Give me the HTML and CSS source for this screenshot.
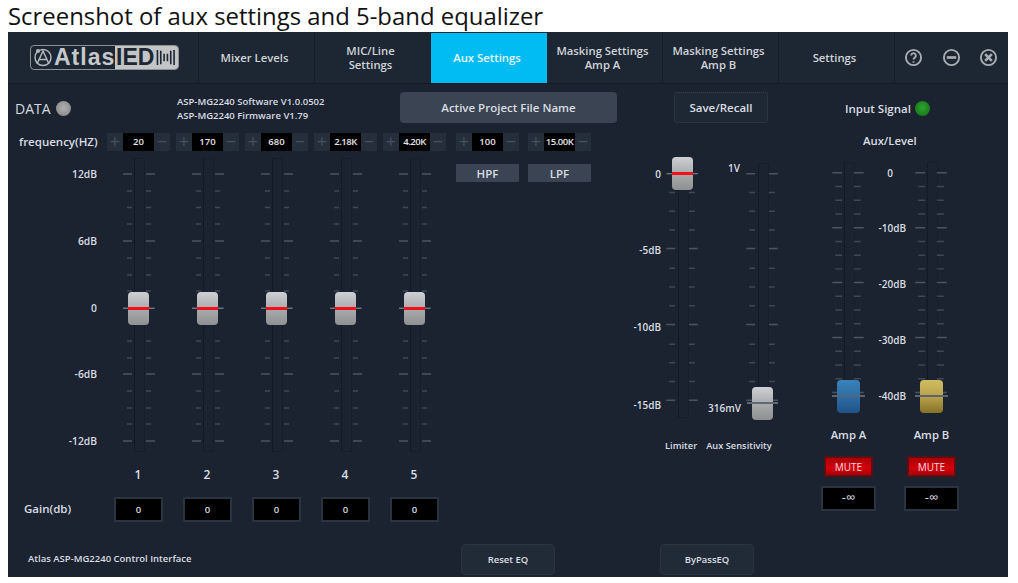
FILE: index.html
```html
<!DOCTYPE html>
<html lang="en">
<head>
<meta charset="utf-8">
<title>Aux settings</title>
<link rel="stylesheet" href="styles.css">
</head>
<body>
<svg class="defs" width="0" height="0" aria-hidden="true">
  <symbol id="eq-scale" viewBox="0 0 32 294">
    <path class="minor" d="M4 33h5M23 33h5M4 49.500h5M23 49.500h5M4 66h5M23 66h5M4 100h5M23 100h5M4 117h5M23 117h5M4 133h5M23 133h5M4 183h5M23 183h5M4 200h5M23 200h5M4 233h5M23 233h5M4 250h5M23 250h5M4 266h5M23 266h5"/>
    <path class="major" d="M0 16h9M23 16h9M0 83h9M23 83h9M0 150h9M23 150h9M0 216h9M23 216h9M0 283h9M23 283h9"/>
  </symbol>
  <symbol id="lim-scale" viewBox="0 0 32 264">
    <path class="minor" d="M3 35h6M23 35h6M3 54h6M23 54h6M3 73h6M23 73h6M3 112h6M23 112h6M3 131h6M23 131h6M3 150h6M23 150h6M3 189h6M23 189h6M3 208h6M23 208h6M3 227h6M23 227h6"/>
    <path class="major" d="M0 16h9M23 16h9M0 92h9M23 92h9M0 169h9M23 169h9M0 246h9M23 246h9"/>
  </symbol>
  <symbol id="aux-scale" viewBox="0 0 34 256">
    <path class="minor" d="M4 25h7M23 25h7M4 39h7M23 39h7M4 53h7M23 53h7M4 81h7M23 81h7M4 95h7M23 95h7M4 109h7M23 109h7M4 137h7M23 137h7M4 151h7M23 151h7M4 165h7M23 165h7M4 193h7M23 193h7M4 207h7M23 207h7M4 221h7M23 221h7"/>
    <path class="major" d="M1 11h10M23 11h10M1 67h10M23 67h10M1 123h10M23 123h10M1 179h10M23 179h10M1 235h10M23 235h10"/>
  </symbol>
</svg>

<h1 class="caption">Screenshot of aux settings and 5-band equalizer</h1>

<main class="panel">
  <header class="topbar">
    <div class="logo-cell">
      <div class="logo">
        <div class="logo-left">
          <svg class="logo-mark" viewBox="0 0 20 20"><circle cx="10" cy="10.500" r="8"/><path d="M4 17 10 4l6 13M6.500 12.500h7"/><circle class="ear" cx="5" cy="4" r="2"/></svg>
          <span class="logo-atlas">Atlas</span>
        </div>
        <div class="logo-right">
          <span class="logo-ied">IED</span>
          <svg class="logo-bars" viewBox="0 0 22 20"><path d="M2 2v16M5.500 3v14M9 6v8M12.500 6v8M16 3v14M19.500 2v16"/></svg>
        </div>
      </div>
    </div>
    <nav class="tabs">
      <a class="tab">Mixer Levels</a>
      <a class="tab">MIC/Line<br>Settings</a>
      <a class="tab tab-active">Aux Settings</a>
      <a class="tab">Masking Settings<br>Amp A</a>
      <a class="tab">Masking Settings<br>Amp B</a>
      <a class="tab">Settings</a>
    </nav>
    <div class="win-icons">
      <svg viewBox="0 0 20 20"><circle cx="10" cy="10" r="8"/><path d="M7.500 8a2.500 2.500 0 1 1 3.800 2.100c-.9.600-1.300 1-1.300 2"/><path d="M10 14v1.500"/></svg>
      <svg viewBox="0 0 20 20"><circle cx="10" cy="10" r="8"/><path class="thick" d="M5 10h10"/></svg>
      <svg viewBox="0 0 20 20"><circle cx="10" cy="10" r="8"/><path class="thick" d="m6.500 6.500 7 7M13.500 6.500l-7 7"/></svg>
    </div>
  </header>

  <section class="toolbar">
    <div class="data">DATA <span class="led led-grey"></span></div>
    <div class="version">ASP-MG2240 Software V1.0.0502<br>ASP-MG2240 Firmware V1.79</div>
    <button class="project">Active Project File Name</button>
    <button class="save">Save/Recall</button>
    <div class="signal">Input Signal <span class="led led-green"></span></div>
  </section>

  <section class="body">
    <div class="eq">
      <div class="freq-label">frequency(HZ)</div>
      <div class="step"><i>+</i><b>20</b><i>−</i></div>
      <div class="step"><i>+</i><b>170</b><i>−</i></div>
      <div class="step"><i>+</i><b>680</b><i>−</i></div>
      <div class="step"><i>+</i><b class="tight">2.18K</b><i>−</i></div>
      <div class="step"><i>+</i><b class="tight">4.20K</b><i>−</i></div>
      <div class="filters">
        <div class="step"><i>+</i><b>100</b><i>−</i></div>
        <div class="step"><i>+</i><b class="tight">15.00K</b><i>−</i></div>
        <button class="filter">HPF</button>
        <button class="filter">LPF</button>
      </div>

      <div class="eq-scale-labels">
        <span>12dB</span><span>6dB</span><span>0</span><span>-6dB</span><span>-12dB</span>
      </div>
      <div class="fader fader-eq"><svg class="scale"><use href="#eq-scale"/></svg><span class="thumb thumb-eq"></span></div>
      <div class="fader fader-eq"><svg class="scale"><use href="#eq-scale"/></svg><span class="thumb thumb-eq"></span></div>
      <div class="fader fader-eq"><svg class="scale"><use href="#eq-scale"/></svg><span class="thumb thumb-eq"></span></div>
      <div class="fader fader-eq"><svg class="scale"><use href="#eq-scale"/></svg><span class="thumb thumb-eq"></span></div>
      <div class="fader fader-eq"><svg class="scale"><use href="#eq-scale"/></svg><span class="thumb thumb-eq"></span></div>

      <div class="band band-first">1</div><div class="band">2</div><div class="band">3</div><div class="band">4</div><div class="band">5</div>

      <div class="gain-label">Gain(db)</div>
      <div class="gain">0</div><div class="gain">0</div><div class="gain">0</div><div class="gain">0</div><div class="gain">0</div>
    </div>

    <div class="mid">
      <div class="mid-faders">
        <div class="lim-labels"><span>0</span><span>-5dB</span><span>-10dB</span><span>-15dB</span></div>
        <div class="fader fader-lim"><svg class="scale"><use href="#lim-scale"/></svg><span class="thumb thumb-lim"></span></div>
        <div class="sens-labels"><span>1V</span><span>316mV</span></div>
        <div class="fader fader-sens"><svg class="scale"><use href="#lim-scale"/></svg><span class="thumb thumb-sens"></span></div>
      </div>
      <div class="mid-names"><span>Limiter</span><span>Aux Sensitivity</span></div>
    </div>

    <div class="aux">
      <div class="aux-title">Aux/Level</div>
      <div class="aux-faders">
        <div class="fader fader-aux"><svg class="scale"><use href="#aux-scale"/></svg><span class="thumb thumb-aux thumb-blue"></span></div>
        <div class="aux-labels"><span>0</span><span>-10dB</span><span>-20dB</span><span>-30dB</span><span>-40dB</span></div>
        <div class="fader fader-aux"><svg class="scale"><use href="#aux-scale"/></svg><span class="thumb thumb-aux thumb-gold"></span></div>
      </div>
      <div class="amps">
        <div class="amp"><div class="amp-name">Amp A</div><button class="mute">MUTE</button><div class="level">-∞</div></div>
        <div class="amp"><div class="amp-name">Amp B</div><button class="mute">MUTE</button><div class="level">-∞</div></div>
      </div>
    </div>
  </section>

  <footer class="foot">
    <div class="foot-text">Atlas ASP-MG2240 Control Interface</div>
    <button class="foot-btn reset">Reset EQ</button>
    <button class="foot-btn bypass">ByPassEQ</button>
  </footer>
</main>
</body>
</html>
```

FILE: styles.css
```css
* { box-sizing: border-box; }
html, body { margin: 0; background: #fff; }
body { font-family: "Open Sans", "Liberation Sans", sans-serif; color: #d9dde2; overflow: hidden; }
.defs { position: absolute; }
button { font: inherit; color: inherit; padding: 0; margin: 0; }

.caption { margin: 0; height: 32px; padding-left: 8px; font-family: "Open Sans", sans-serif; font-size: 23.900px; line-height: 31px; font-weight: 400; color: #111; white-space: nowrap; }

.panel { width: 1000px; height: 545px; margin-left: 8px; background: #1b2330; display: flex; flex-direction: column; font-size: 11px; font-weight: 600; }

/* header */
.topbar { height: 52px; flex: none; display: flex; background: #1d2633; border-bottom: 1px solid #141a24; }
.logo-cell { width: 191px; flex: none; display: flex; align-items: center; padding-left: 22px; border-right: 1px solid #161d28; }
.logo { width: 149px; height: 25px; display: flex; border: 1px solid #8d9196; border-radius: 4px; overflow: hidden; }
.logo-left { width: 84px; display: flex; color: #c6c8cb; }
.logo-mark { width: 20px; height: 20px; margin: 1px 0 0 2px; flex: none; fill: none; stroke: #b3b6ba; stroke-width: 1.500; }
.logo-mark .ear { fill: #b3b6ba; stroke: none; }
.logo-atlas { font-family: "Liberation Sans", sans-serif; font-weight: 700; font-size: 23px; line-height: 22px; letter-spacing: 1px; margin-left: 1px; }
.logo-right { flex: 1; display: flex; background: #c2c4c6; color: #1d2633; }
.logo-ied { font-family: "Liberation Sans", sans-serif; font-weight: 700; font-size: 23px; line-height: 22px; width: 39px; padding-left: 1px; }
.logo-bars { width: 22px; height: 19px; margin: 2px 0 0 1px; flex: none; fill: none; stroke: #1d2633; stroke-width: 1.700; }
.tabs { display: flex; flex: none; }
.tab { width: 116px; padding-right: 4px; display: flex; align-items: center; justify-content: center; text-align: center; line-height: 14px; border-right: 1px solid #161d28; font-size: 11.300px; color: #cfd3d8; }
.tab-active { background: #00bcf2; color: #e8f6fb; border-right: 0; margin-top: 1px; }
.win-icons { display: flex; gap: 18.500px; align-items: center; padding-left: 9px; }
.win-icons svg { width: 19px; height: 19px; fill: none; stroke: #a9adb2; stroke-width: 2; }
.win-icons .thick { stroke-width: 2.800; }

/* toolbar */
.toolbar { height: 48px; flex: none; display: flex; align-items: center; }
.data { width: 169px; padding-left: 7px; display: flex; align-items: center; gap: 5px; font-size: 14px; font-weight: 400; color: #d5d9de; }
.led { display: inline-block; width: 15px; height: 15px; border-radius: 50%; }
.led-grey { background: radial-gradient(circle at 50% 45%, #b0b0b0, #808080); }
.led-green { background: radial-gradient(circle at 50% 45%, #2fa52f, #0d6b12); }
.version { width: 223px; font-size: 9.500px; line-height: 14px; padding-top: 1px; white-space: nowrap; }
.project { width: 217px; height: 31px; background: #3a4452; border: 0; border-radius: 4px; font-size: 11.500px; margin-top: -1px; }
.save { width: 94px; height: 31px; margin-left: 57px; background: #1e2835; border: 1px dotted #39434f; border-radius: 3px; font-size: 11.500px; margin-top: -1px; }
.signal { margin-left: 77px; display: flex; align-items: center; gap: 4px; font-size: 11.500px; }

/* body */
.body { flex: 1; display: flex; min-height: 0; }

.eq { width: 625px; flex: none; display: grid; grid-template-columns: 96px repeat(5, 69px) 184px; grid-template-rows: 18px 294px 31px 25px; row-gap: 7px; align-content: start; padding-top: 1px; }
.freq-label { font-size: 11.500px; padding-left: 11px; line-height: 17px; white-space: nowrap; }
.step { width: 63px; height: 18px; justify-self: center; display: flex; }
.step i { flex: 1; background: #252e3b; color: #465160; font-style: normal; text-align: center; line-height: 16px; font-size: 18px; font-weight: 400; }
.step b { width: 31px; background: #000; color: #e6e6e6; font-size: 9.500px; font-weight: 600; text-align: center; line-height: 18px; }
.step b.tight { letter-spacing: -0.500px; white-space: nowrap; overflow: hidden; }

.filters { grid-column: 7; grid-row: 1 / span 2; padding-left: 7px; display: grid; grid-template-columns: 63px 63px; column-gap: 9px; row-gap: 13px; align-content: start; }
.filters .step { justify-self: start; }
.filter { height: 18px; background: #3a4452; border: 0; font-size: 11.500px; }

.eq-scale-labels { grid-column: 1; position: relative; }
.eq-scale-labels span { position: absolute; right: 7px; line-height: 14px; font-size: 10.300px; }
.eq-scale-labels span:nth-child(1) { top: 9px; }
.eq-scale-labels span:nth-child(2) { top: 76px; }
.eq-scale-labels span:nth-child(3) { top: 143px; }
.eq-scale-labels span:nth-child(4) { top: 209px; }
.eq-scale-labels span:nth-child(5) { top: 276px; }

.fader { position: relative; justify-self: center; }
.fader::before { content: ""; position: absolute; top: 0; bottom: 0; left: 50%; width: 9px; margin-left: -4.500px; border: 1px solid #171e29; border-left-color: #141a24; background: #1b2330; }
.scale { position: absolute; inset: 0; width: 100%; height: 100%; fill: none; }
.minor { stroke: #3f4856; stroke-width: 1.500; }
.major { stroke: #4a5462; stroke-width: 1.500; }
.thumb { position: absolute; left: 50%; width: 21px; height: 33px; margin-left: -10.500px; border-radius: 4px; background: linear-gradient(#ced0d3, #a9abad 50%, #8f9091); }
.thumb::after { content: ""; position: absolute; left: 0; right: 0; top: 15px; height: 3px; background: #f2101a; }
.thumb::before { content: ""; position: absolute; left: -5px; right: -5px; top: 16px; height: 1px; background: #6d7480; }
.fader-eq { width: 32px; height: 294px; }
.thumb-eq { top: 134px; }

.band { font-size: 12px; text-align: center; line-height: 17px; padding-top: 7px; padding-right: 1px; }
.band-first { grid-column: 2; }
.gain-label { grid-column: 1; font-size: 11.500px; padding-left: 16px; line-height: 24px; }
.gain { width: 49px; height: 25px; justify-self: center; background: #000; border: 2px solid #2a3340; text-align: center; font-size: 9.500px; line-height: 21px; }

/* limiter + sensitivity */
.mid { width: 172px; flex: none; padding-top: 26px; }
.mid-faders { display: flex; height: 260px; margin-left: -1px; }
.lim-labels { width: 34px; position: relative; }
.lim-labels span, .sens-labels span { position: absolute; right: 5px; line-height: 14px; font-size: 10px; white-space: nowrap; }
.lim-labels span:nth-child(1) { top: 9px; }
.lim-labels span:nth-child(2) { top: 85px; }
.lim-labels span:nth-child(3) { top: 162px; }
.lim-labels span:nth-child(4) { top: 240px; }
.fader-lim, .fader-sens { width: 32px; height: 260px; }
.fader-sens::before { top: 5px; }
.sens-labels { width: 48px; position: relative; }
.sens-labels span:nth-child(1) { top: 3px; right: 6px; }
.sens-labels span:nth-child(2) { top: 243px; right: 5px; }
.thumb-lim { top: -1px; }
.thumb-sens { top: 229px; }
.thumb-sens::after { display: none; }
.thumb-sens::before { height: 2px; background: #606875; left: -5px; right: -5px; top: 15px; }
.mid-names { display: flex; padding-left: 32px; padding-top: 21px; gap: 9px; font-size: 9.300px; white-space: nowrap; }

/* aux */
.aux { flex: 1; padding-left: 8px; display: flex; flex-direction: column; }
.aux-title { padding-left: 50px; font-size: 11.300px; line-height: 17px; }
.aux-faders { display: flex; margin-top: 13px; padding-left: 18px; height: 251px; }
.fader-aux { width: 34px; height: 251px; }
.aux-labels { width: 49px; position: relative; }
.aux-labels span { position: absolute; right: 8px; font-size: 10px; line-height: 14px; white-space: nowrap; }
.aux-labels span:nth-child(1) { top: 4px; right: 21px; }
.aux-labels span:nth-child(2) { top: 59px; }
.aux-labels span:nth-child(3) { top: 115px; }
.aux-labels span:nth-child(4) { top: 171px; }
.aux-labels span:nth-child(5) { top: 227px; }
.thumb-aux { top: 218px; width: 23px; margin-left: -11.500px; }
.thumb-aux::after { display: none; }
.thumb-aux::before { height: 2px; top: 15px; background: #5a6370; }
.thumb-blue { background: linear-gradient(#3a82b8, #2b6ea8 50%, #205384); }
.thumb-gold { background: linear-gradient(#cfbd62, #b9a24a 50%, #85722a); }
.amps { display: flex; padding-left: 8px; gap: 28px; margin-top: 14px; }
.amp { width: 55px; display: flex; flex-direction: column; align-items: center; }
.amp-name { font-size: 11.300px; line-height: 16px; }
.mute { width: 49px; height: 21px; margin-top: 13px; background: linear-gradient(#a80006, #d50009 60%, #a50006); border: 2px solid #5d0d14; font-size: 10px; font-weight: 400; color: #f7dfe0; line-height: 16px; }
.level { width: 55px; height: 25px; margin-top: 9px; background: #000; border: 2px solid #2a3340; text-align: center; font-size: 13px; font-weight: 400; line-height: 19px; }

/* footer */
.foot { height: 33px; flex: none; display: flex; align-items: flex-start; }
.foot-text { width: 453px; padding-left: 20px; font-size: 9.500px; line-height: 30px; white-space: nowrap; }
.foot-btn { width: 94px; height: 31px; background: #212b38; border: 1px solid #2a3441; border-radius: 4px; font-size: 9.500px; }
.bypass { margin-left: 105px; }
```
